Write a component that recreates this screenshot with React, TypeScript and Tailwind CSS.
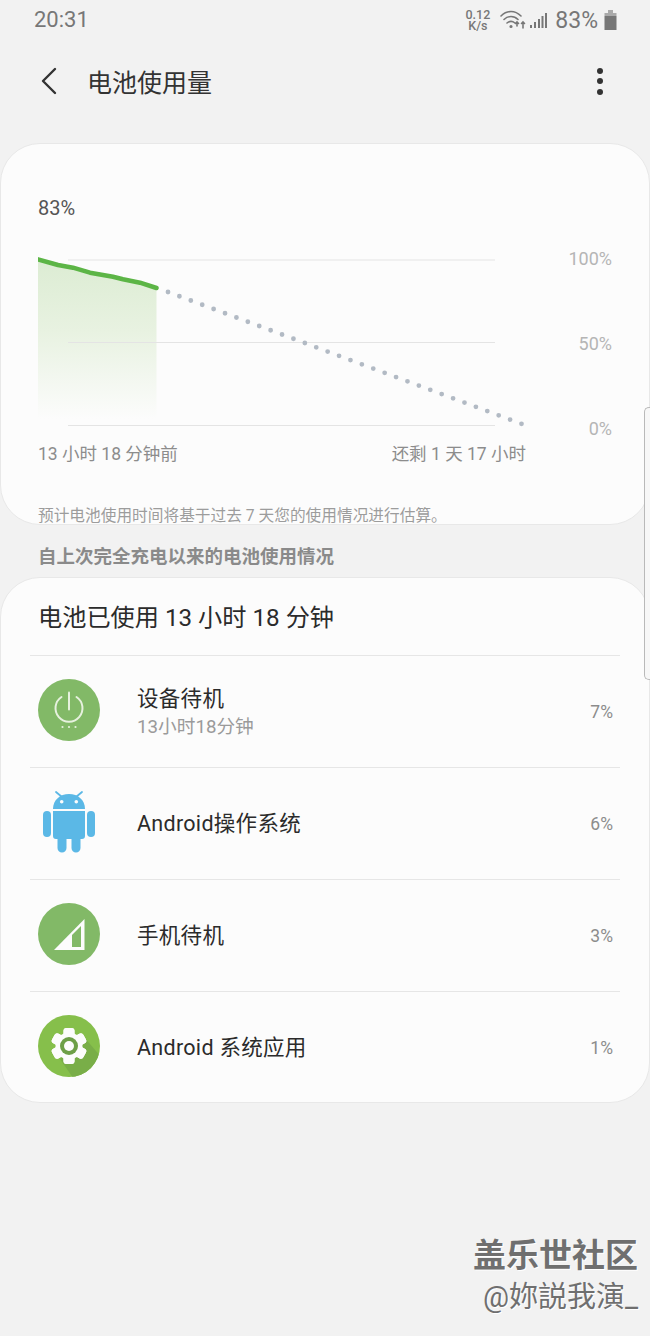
import { ReactNode } from 'react';

const usage = [
  { name: '设备待机', sub: '13小时18分钟', pct: '7%', icon: 'power' },
  { name: 'Android操作系统', pct: '6%', icon: 'android' },
  { name: '手机待机', pct: '3%', icon: 'signal' },
  { name: 'Android 系统应用', pct: '1%', icon: 'gear' },
];

const PowerIcon = () => (
  <svg width="62" height="62" viewBox="0 0 62 62">
    <circle cx="31" cy="31" r="31" fill="#82b967" />
    <path d="M23.500 18a13.500 13.500 0 1 0 15 0" fill="none" stroke="#e6f1de" strokeWidth="2" strokeLinecap="round" />
    <path d="M31 13.500v17" fill="none" stroke="#e6f1de" strokeWidth="2" strokeLinecap="round" />
    <circle cx="24.500" cy="48" r="1.100" fill="#e6f1de" />
    <circle cx="31" cy="48" r="1.100" fill="#e6f1de" />
    <circle cx="37.500" cy="48" r="1.100" fill="#e6f1de" />
  </svg>
);

const AndroidIcon = () => (
  <svg width="62" height="62" viewBox="0 0 62 62" fill="#5bb8e6">
    <path d="M18 1l6 5M44 1l-6 5" stroke="#5bb8e6" strokeWidth="1.800" strokeLinecap="round" />
    <path d="M15 18c0-9 7-15 16-15s16 6 16 15z" />
    <circle cx="23.700" cy="10.700" r="1.800" fill="#fcfcfc" />
    <circle cx="38.300" cy="10.700" r="1.800" fill="#fcfcfc" />
    <path d="M15 20H47V45a3 3 0 0 1-3 3H42.500V57a4.500 4.500 0 0 1-9 0V48H28.500V57a4.500 4.500 0 0 1-9 0V48H18a3 3 0 0 1-3-3z" />
    <rect x="5" y="20" width="8" height="26" rx="4" />
    <rect x="49" y="20" width="8" height="26" rx="4" />
  </svg>
);

const SignalIcon = () => (
  <svg width="62" height="62" viewBox="0 0 62 62">
    <circle cx="31" cy="31" r="31" fill="#82b967" />
    <path d="M16 47L46.500 16V47z" fill="#fcfcfc" />
    <path d="M34 44V32L43 23V44z" fill="#82b967" />
  </svg>
);

const GearIcon = () => (
  <svg width="62" height="62" viewBox="0 0 62 62">
    <defs>
      <clipPath id="gear-clip">
        <circle cx="31" cy="31" r="31" />
      </clipPath>
    </defs>
    <circle cx="31" cy="31" r="31" fill="#86bf4b" />
    <path d="M22 44L46 22L70 50L40 70z" fill="#79ae48" clipPath="url(#gear-clip)" />
    <g fill="#fcfcfc">
      {[0, 60, 120, 180, 240, 300].map((deg) => (
        <rect key={deg} x="25.500" y="13" width="11" height="36" rx="3" transform={`rotate(${deg} 31 31)`} />
      ))}
      <circle cx="31" cy="31" r="13.500" />
    </g>
    <circle cx="31" cy="31" r="9" fill="#6d9f47" />
    <circle cx="31" cy="31" r="5" fill="#fcfcfc" />
  </svg>
);

const icons: Record<string, ReactNode> = {
  power: <PowerIcon />,
  android: <AndroidIcon />,
  signal: <SignalIcon />,
  gear: <GearIcon />,
};

const BatteryChart = () => (
  <svg width="492" height="194" viewBox="0 0 492 194" className="shrink-0">
    <defs>
      <linearGradient id="fade" x1="0" y1="0" x2="0" y2="1">
        <stop offset="0" stopColor="#dcecd3" />
        <stop offset="0.45" stopColor="#e8f2e1" />
        <stop offset="1" stopColor="#fcfcfc" />
      </linearGradient>
    </defs>
    <path d="M0 12.300L20 18L35 20.700L52 25.700L75 29.700L85 32.300L102 35.700L118.500 41V172H0z" fill="url(#fade)" />
    <path d="M30 13H457M30 95.500H457M30 178.500H457" stroke="#e4e4e4" strokeWidth="1.200" fill="none" />
    <path
      d="M0 12.300L20 18L35 20.700L52 25.700L75 29.700L85 32.300L102 35.700L118.500 41"
      fill="none"
      stroke="#5cb546"
      strokeWidth="4.500"
      strokeLinecap="round"
      strokeLinejoin="round"
    />
    <path d="M130 45L484 177" fill="none" stroke="#b2bac4" strokeWidth="4.800" strokeLinecap="round" strokeDasharray="0 12.170" />
  </svg>
);

export default function App() {
  return (
    <div className="relative h-[1336px] w-[650px] overflow-hidden bg-[#f2f2f2] font-['Roboto','Noto_Sans_CJK_SC',sans-serif]">
      {/* Status bar */}
      <div className="flex h-[40px] items-center justify-between pl-[34px] pr-[33px] text-[#777777]">
        <span className="text-[22px] leading-none">20:31</span>
        <div className="flex items-center">
          <div className="mr-[10px] flex flex-col items-center text-[12.500px] font-medium leading-[11px]">
            <span>0.12</span>
            <span>K/s</span>
          </div>
          <svg width="26" height="22" viewBox="0 0 26 22" fill="none" stroke="#777777" strokeWidth="1.600" strokeLinecap="round">
            <path d="M1 7c6-6 14-6 20 0M4 10.500c4-4 10-4 14 0M7 14c2.500-2 5.500-2 8 0" />
            <circle cx="11" cy="17.500" r="0.800" fill="#777777" />
            <path d="M17 17v-4M15.500 14.500l1.500-1.500 1.500 1.500M23 19v-6M21.500 14.500l1.500-1.500 1.500 1.500" />
          </svg>
          <svg width="20" height="20" viewBox="0 0 20 20" fill="#777777" className="ml-[3px]">
            <rect x="1" y="15" width="2" height="3" />
            <rect x="5" y="12" width="2" height="6" />
            <rect x="9" y="9" width="2" height="9" />
            <rect x="12.500" y="6" width="2" height="12" />
            <rect x="16" y="3" width="2" height="15" />
          </svg>
          <span className="ml-[6px] text-[23px] leading-none">83%</span>
          <svg width="13" height="20" viewBox="0 0 13 20" className="ml-[6px]">
            <rect x="4" y="0" width="5" height="3" fill="#aaaaaa" />
            <rect x="0.500" y="3" width="12" height="3" fill="#aaaaaa" />
            <rect x="0.500" y="6" width="12" height="14" fill="#777777" />
          </svg>
        </div>
      </div>

      {/* Toolbar */}
      <div className="flex h-[82px] items-center pl-[39px] pr-[47px]">
        <svg width="20" height="28" viewBox="0 0 20 28" fill="none" stroke="#333333" strokeWidth="2.400" strokeLinecap="round" strokeLinejoin="round">
          <path d="M16 2L4 14L16 26" />
        </svg>
        <h1 className="ml-[28px] flex-1 pt-[4px] text-[25px] font-normal leading-none text-[#333333]">电池使用量</h1>
        <div className="flex flex-col gap-[4.500px]">
          <span className="h-[6px] w-[6px] rounded-full bg-[#333333]" />
          <span className="h-[6px] w-[6px] rounded-full bg-[#333333]" />
          <span className="h-[6px] w-[6px] rounded-full bg-[#333333]" />
        </div>
      </div>

      {/* Chart card */}
      <section className="mt-[21px] h-[382px] rounded-[40px] border border-[#e8e8e8] bg-[#fcfcfc] pl-[37px] pt-[52px]">
        <div className="text-[20px] leading-[24px] text-[#555555]">83%</div>
        <div className="mt-[27px] flex">
          <BatteryChart />
          <div className="ml-[20px] flex h-[194px] w-[62px] flex-col items-end justify-between text-[18px] leading-[24px] text-[#b5b5b5]">
            <span>100%</span>
            <span>50%</span>
            <span>0%</span>
          </div>
        </div>
        <div className="mt-[1px] flex w-[488px] justify-between text-[17.500px] leading-[24px] text-[#8c8c8c]">
          <span>13 小时 18 分钟前</span>
          <span>还剩 1 天 17 小时</span>
        </div>
        <p className="mt-[40px] text-[15.700px] leading-[20px] text-[#9c9c9c]">预计电池使用时间将基于过去 7 天您的使用情况进行估算。</p>
      </section>

      <h2 className="ml-[38px] flex h-[52px] items-center pt-[14px] text-[18.500px] font-bold text-[#8a8a8a]">自上次完全充电以来的电池使用情况</h2>

      {/* Usage card */}
      <section className="h-[526px] rounded-[40px] border border-[#e8e8e8] bg-[#fcfcfc] px-[29px]">
        <div className="flex h-[77px] items-center pl-[8px] pt-[4px] text-[24.200px] text-[#2b2b2b]">电池已使用 13 小时 18 分钟</div>
        {usage.map((item) => (
          <div key={item.name} className="flex h-[112px] items-center border-t border-[#e6e6e6] pl-[8px] pr-[7px]">
            <div className="mb-[3px] h-[62px] w-[62px] shrink-0">{icons[item.icon]}</div>
            <div className="ml-[37px] flex-1">
              <div className="text-[21.500px] leading-[28px] tracking-[0.3px] text-[#2b2b2b]">{item.name}</div>
              {item.sub && <div className="mt-[2px] text-[18.700px] leading-[24px] text-[#9a9a9a]">{item.sub}</div>}
            </div>
            <span className="pt-[2px] text-[17.500px] text-[#8c8c8c]">{item.pct}</span>
          </div>
        ))}
      </section>

      {/* Edge panel handle */}
      <div className="absolute right-0 top-[407px] h-[273px] w-[6px] rounded-l-[5px] border border-r-0 border-[#b9b9b9] bg-[#f7f7f7]" />

      {/* Watermark */}
      <div className="absolute right-[12px] top-[1237px] flex flex-col items-end text-[#6f6f6f] [text-shadow:1px_1px_0_#ffffff]">
        <span className="text-[33px] font-bold leading-[38px]">盖乐世社区</span>
        <span className="text-[29px] leading-[44px]">@妳説我演_</span>
      </div>
    </div>
  );
}
